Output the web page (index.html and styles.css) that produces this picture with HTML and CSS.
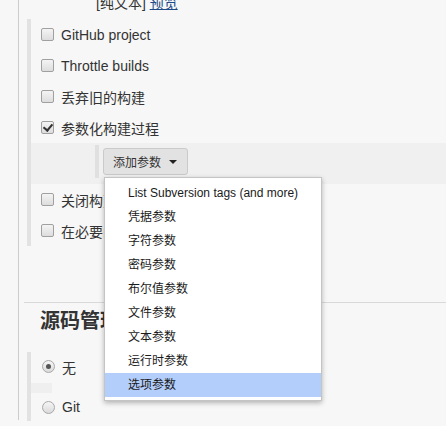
FILE: index.html
```html
<!DOCTYPE html>
<html lang="zh-CN">
<head>
<meta charset="utf-8">
<title>配置</title>
<link rel="stylesheet" href="styles.css">
</head>
<body>
<div class="page">
  <div class="desc">[纯文本] <a href="#" class="link">预览</a></div>

  <div class="group props">
    <label class="row"><input type="checkbox" class="cb"><span>GitHub project</span></label>
    <label class="row"><input type="checkbox" class="cb"><span>Throttle builds</span></label>
    <label class="row"><input type="checkbox" class="cb"><span>丢弃旧的构建</span></label>
    <label class="row"><input type="checkbox" class="cb" checked><span>参数化构建过程</span></label>
    <div class="sub">
      <div class="sub-inner">
        <div class="dd">
          <button class="btn" type="button">添加参数<span class="caret"></span></button>
          <ul class="menu">
            <li>List Subversion tags (and more)</li>
            <li>凭据参数</li>
            <li>字符参数</li>
            <li>密码参数</li>
            <li>布尔值参数</li>
            <li>文件参数</li>
            <li>文本参数</li>
            <li>运行时参数</li>
            <li class="active">选项参数</li>
          </ul>
        </div>
      </div>
    </div>
    <label class="row"><input type="checkbox" class="cb"><span>关闭构建</span></label>
    <label class="row"><input type="checkbox" class="cb"><span>在必要的时候并发构建</span></label>
  </div>

  <hr class="sep">
  <h2 class="title">源码管理</h2>

  <div class="group scm">
    <label class="row radio-row"><input type="radio" name="scm" class="rd" checked><span>无</span></label>
    <div class="patch"></div>
    <label class="row radio-row git"><input type="radio" name="scm" class="rd"><span>Git</span></label>
  </div>
</div>
</body>
</html>
```

FILE: styles.css
```css
html, body {
  margin: 0;
  padding: 0;
  height: 100%;
  overflow: hidden;
  background: #f7f7f7;
}

body {
  font-family: "Liberation Sans", Arial, "Noto Sans CJK SC", sans-serif;
  color: #333;
}

.page {
  margin-left: 18px;
  border-left: 1px solid #cccccc;
  height: 100%;
}

.desc {
  margin-top: -6px;
  padding-left: 77px;
  font-size: 14px;
  line-height: 18px;
  height: 18px;
  color: #333;
}

.link {
  color: #204a87;
  text-decoration: underline;
}

.group {
  margin-left: 8px;
  border-left: 4px solid #e2e2e2;
}

.props {
  margin-top: 7px;
}

.row {
  display: flex;
  align-items: center;
  gap: 7px;
  height: 31px;
  padding-left: 10px;
  font-size: 14px;
  color: #333;
  white-space: nowrap;
}

.cb {
  -webkit-appearance: none;
  appearance: none;
  position: relative;
  width: 13px;
  height: 13px;
  margin: -1px 0 0 0;
  border: 1px solid #a0a0a0;
  border-radius: 2px;
  background: linear-gradient(#f4f4f4, #dddddd);
  box-sizing: border-box;
  flex: none;
}

.cb:checked::after {
  content: "";
  position: absolute;
  left: 3px;
  top: 0px;
  width: 4px;
  height: 7px;
  border-right: 2px solid #333;
  border-bottom: 2px solid #333;
  transform: rotate(40deg);
}

.sub {
  background: #f0f0f0;
  padding: 2px 0 6px 64px;
}

.sub-inner {
  border-left: 4px solid #e0e0e0;
  padding: 3px 0 3px 4px;
}

.dd {
  position: relative;
  display: inline-block;
  vertical-align: top;
  z-index: 10;
}

.btn {
  display: flex;
  align-items: center;
  gap: 8px;
  height: 27px;
  padding: 0 10px 0 9px;
  margin: 0;
  border: 1px solid #cacaca;
  border-radius: 3px;
  background: #e2e2e2;
  font-family: "Liberation Sans", Arial, "Noto Sans CJK SC", sans-serif;
  font-size: 12px;
  color: #333;
  box-sizing: border-box;
}

.caret {
  width: 0;
  height: 0;
  border-left: 4px solid transparent;
  border-right: 4px solid transparent;
  border-top: 4px solid #222;
  margin-top: 1px;
}

.menu {
  position: absolute;
  top: calc(100% + 2px);
  left: 1px;
  width: 218px;
  box-sizing: border-box;
  margin: 0;
  padding: 3px 0;
  list-style: none;
  background: #fff;
  border: 1px solid #c4c4c4;
  box-shadow: 0 2px 5px rgba(0, 0, 0, 0.28);
}

.menu li {
  height: 24px;
  line-height: 24px;
  padding-left: 23px;
  font-size: 12px;
  color: #1a1a1a;
  white-space: nowrap;
}

.menu li.active {
  background: #b3cefb;
}

.sep {
  margin: 56px 0 0 5px;
  height: 0;
  border: none;
  border-top: 1px solid #d9d9d9;
}

.title {
  margin: 6px 0 0 0;
  padding-left: 21px;
  font-size: 20px;
  line-height: 24px;
  font-weight: bold;
  color: #333;
}

.scm {
  margin-top: 19px;
}

.radio-row {
  height: 29px;
  padding-left: 11px;
  gap: 7px;
}

.git {
  height: 28px;
}

.rd {
  -webkit-appearance: none;
  appearance: none;
  position: relative;
  width: 13px;
  height: 13px;
  margin: 0;
  border: 1px solid #a8a8a8;
  border-radius: 50%;
  background: linear-gradient(#f6f6f6, #dadada);
  box-sizing: border-box;
  flex: none;
}

.rd:checked::after {
  content: "";
  position: absolute;
  left: 3px;
  top: 3px;
  width: 5px;
  height: 5px;
  border-radius: 50%;
  background: #555;
}

.patch {
  margin-top: 2px;
  width: 21px;
  height: 10px;
  background: #efefef;
}
```
